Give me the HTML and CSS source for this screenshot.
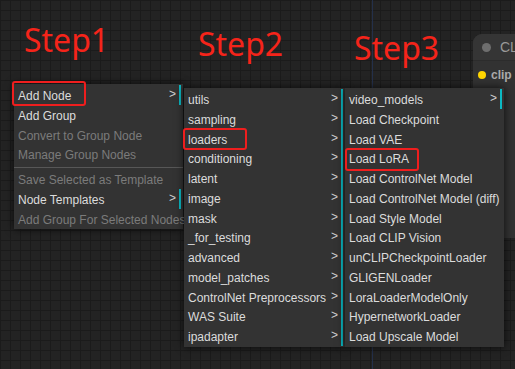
FILE: index.html
```html
<!DOCTYPE html>
<html>
<head>
<meta charset="utf-8">
<link rel="stylesheet" href="styles.css">
</head>
<body>
<div class="canvas">
  <div class="link-line"></div>

  <div class="node">
    <div class="node-title"><span class="node-dot"></span><span class="node-name">CLIP Text Encode (Prompt)</span></div>
    <div class="node-body">
      <div class="slot"><span class="slot-dot"></span><span class="slot-name">clip</span></div>
    </div>
  </div>

  <div class="step step1">Step1</div>
  <div class="step step2">Step2</div>
  <div class="step step3">Step3</div>

  <div class="menu menu1">
    <div class="entry sub">Add Node</div>
    <div class="entry">Add Group</div>
    <div class="entry off">Convert to Group Node</div>
    <div class="entry off">Manage Group Nodes</div>
    <div class="sep"></div>
    <div class="entry off">Save Selected as Template</div>
    <div class="entry sub">Node Templates</div>
    <div class="entry off">Add Group For Selected Nodes</div>
  </div>

  <div class="menu menu2">
    <div class="entry sub">utils</div>
    <div class="entry sub">sampling</div>
    <div class="entry sub">loaders</div>
    <div class="entry sub">conditioning</div>
    <div class="entry sub">latent</div>
    <div class="entry sub">image</div>
    <div class="entry sub">mask</div>
    <div class="entry sub">_for_testing</div>
    <div class="entry sub">advanced</div>
    <div class="entry sub">model_patches</div>
    <div class="entry sub">ControlNet Preprocessors</div>
    <div class="entry sub">WAS Suite</div>
    <div class="entry sub">ipadapter</div>
  </div>

  <div class="menu menu3">
    <div class="entry sub">video_models</div>
    <div class="entry">Load Checkpoint</div>
    <div class="entry">Load VAE</div>
    <div class="entry">Load LoRA</div>
    <div class="entry">Load ControlNet Model</div>
    <div class="entry">Load ControlNet Model (diff)</div>
    <div class="entry">Load Style Model</div>
    <div class="entry">Load CLIP Vision</div>
    <div class="entry">unCLIPCheckpointLoader</div>
    <div class="entry">GLIGENLoader</div>
    <div class="entry">LoraLoaderModelOnly</div>
    <div class="entry">HypernetworkLoader</div>
    <div class="entry">Load Upscale Model</div>
  </div>

  <div class="mark mark1"></div>
  <div class="mark mark2"></div>
  <div class="mark mark3"></div>
</div>
</body>
</html>
```

FILE: styles.css
```css
html, body {
  margin: 0;
  padding: 0;
}

body {
  width: 515px;
  height: 369px;
  overflow: hidden;
  background-color: #232323;
}

.canvas {
  position: relative;
  width: 515px;
  height: 369px;
  overflow: hidden;
  background-color: #232323;
  background-image:
    linear-gradient(to right, #1b1b1b 1px, transparent 1px),
    linear-gradient(to bottom, #1b1b1b 1px, transparent 1px);
  background-size: 10px 10px;
  background-position: 0 0;
}

.link-line {
  position: absolute;
  left: 372px;
  top: 0;
  width: 1px;
  height: 369px;
  background: #24304a;
}

/* node on canvas */
.node {
  position: absolute;
  left: 473px;
  top: 34px;
  width: 220px;
  height: 204px;
  border-radius: 9px;
  background: #323232;
  overflow: hidden;
  display: flex;
  flex-direction: column;
}

.node-title {
  height: 26px;
  flex: none;
  background: #353535;
  display: flex;
  align-items: center;
  gap: 9px;
  padding-left: 9px;
  font: 14px "Liberation Sans", Arial, sans-serif;
  color: #999;
  white-space: nowrap;
  border-bottom: 1px solid #2c2c2c;
}

.node-dot {
  width: 9px;
  height: 9px;
  border-radius: 50%;
  background: #6e6e6e;
  flex: none;
}

.node-body {
  flex: 1;
  padding-top: 7px;
}

.slot {
  display: flex;
  align-items: center;
  gap: 5px;
  padding-left: 5px;
  height: 14px;
  font: bold 12px "Liberation Sans", Arial, sans-serif;
  color: #aaa;
}

.slot-dot {
  width: 8px;
  height: 8px;
  border-radius: 50%;
  background: #ffd500;
  flex: none;
}

/* step annotations */
.step {
  position: absolute;
  font: 32px "Noto Sans", "Liberation Sans", sans-serif;
  line-height: 32px;
  color: #f5241a;
  white-space: nowrap;
}

.step1 { left: 24px; top: 24px; }
.step2 { left: 198px; top: 28px; }
.step3 { left: 354px; top: 32px; }

/* context menus */
.menu {
  position: absolute;
  background: #333333;
  padding: 1px 0;
  box-shadow: 0 0 8px rgba(0, 0, 0, 0.75);
  font: 12px "Liberation Sans", Arial, sans-serif;
  color: #dcdcdc;
  display: flex;
  flex-direction: column;
}

.menu1 { left: 14px; top: 84px; width: 169px; }
.menu2 { left: 184px; top: 88px; width: 161px; }
.menu3 { left: 345px; top: 88px; width: 159px; }

.entry {
  position: relative;
  box-sizing: border-box;
  height: 19.75px;
  padding-top: 3px;
  line-height: 16.75px;
  margin: 0 2px;
  padding-left: 2px;
  white-space: nowrap;
}

.entry.sub {
  border-right: 2px solid #0cb9c3;
}

.entry.sub::after {
  content: ">";
  position: absolute;
  right: 3px;
  top: 1px;
  color: #cfcfcf;
}

.entry.off {
  color: #7b7b7b;
}

.sep {
  margin: 3px 0 1px;
  border-bottom: 1px solid #575757;
}

/* red highlight boxes */
.mark {
  position: absolute;
  box-sizing: border-box;
  border: 2px solid #ef1e1e;
  border-radius: 3px;
}

.mark1 { left: 12px; top: 81px; width: 74px; height: 25px; }
.mark2 { left: 183px; top: 128px; width: 64px; height: 22px; }
.mark3 { left: 345px; top: 148px; width: 74px; height: 23px; }
```
